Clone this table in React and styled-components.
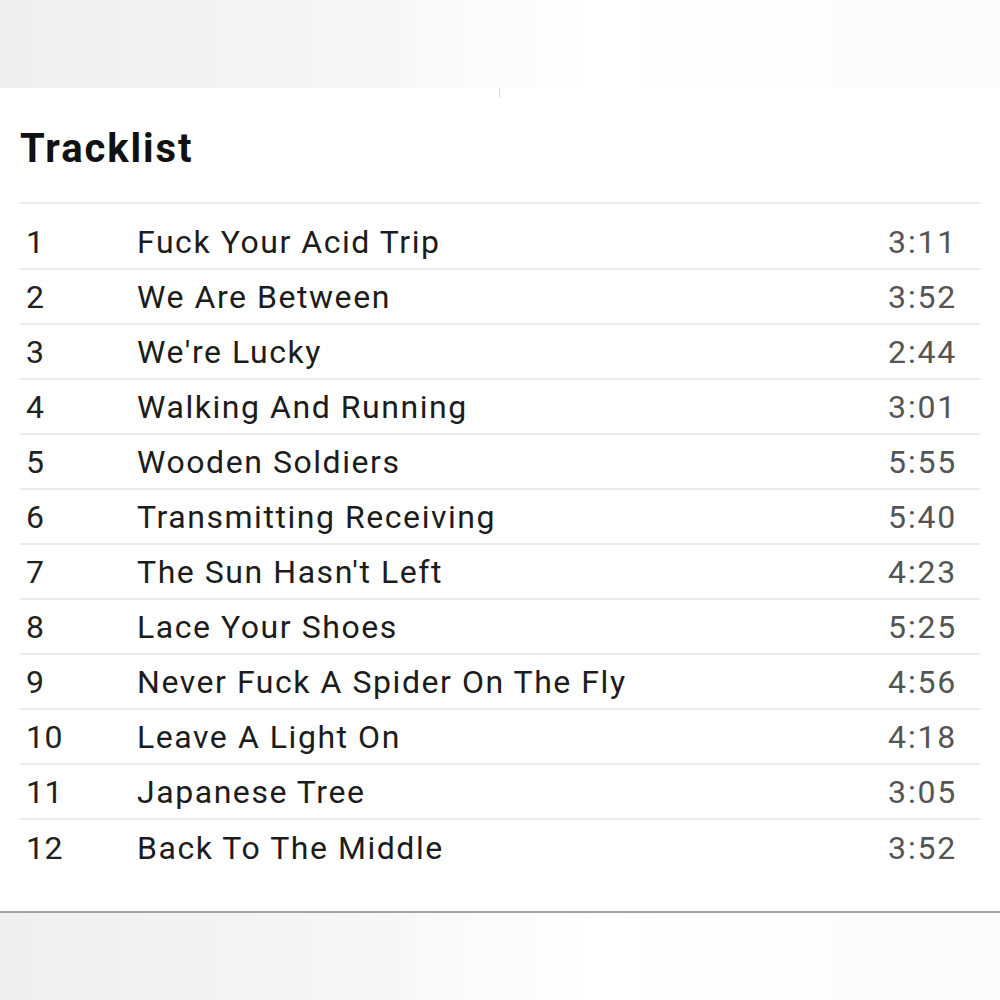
import React from "react";
import styled, { createGlobalStyle } from "styled-components";

const GlobalStyle = createGlobalStyle`
  html, body {
    margin: 0;
    padding: 0;
    background: #ffffff;
  }
  body {
    font-family: Roboto, "Liberation Sans", Arial, sans-serif;
  }
`;

const Page = styled.div`
  width: 1000px;
  height: 1000px;
  display: flex;
  flex-direction: column;
  background: linear-gradient(90deg, #efefef 0%, #f6f6f6 35%, #ffffff 60%, #fbfbfb 100%);
  overflow: hidden;
`;

const TopBand = styled.div`
  height: 88px;
  flex: none;
`;

const Panel = styled.section`
  position: relative;
  flex: none;
  background: #ffffff;
  padding: 0 20px 36px;
  border-bottom: 2px solid #a3a3a3;
`;

const Tick = styled.span`
  position: absolute;
  left: 499px;
  top: 0;
  width: 1px;
  height: 9px;
  background: #d6d6d6;
`;

const Header = styled.header`
  padding-top: 41px;
  padding-bottom: 33px;
  border-bottom: 2px solid #ebebeb;
`;

const Title = styled.h2`
  margin: 0;
  font-family: Roboto, "Liberation Sans", Arial, sans-serif;
  font-weight: 700;
  font-size: 40px;
  line-height: 40px;
  letter-spacing: 1.9px;
  color: #111111;
`;

const List = styled.ol`
  list-style: none;
  margin: 0;
  padding: 11px 0 0;
`;

const Row = styled.li`
  display: flex;
  align-items: center;
  height: 55px;
  box-sizing: border-box;
  border-bottom: ${(p) => (p.$last ? "none" : "2px solid #ebebeb")};
  font-size: 32px;
  color: #222222;
`;

const Num = styled.span`
  width: 117px;
  flex: none;
  padding-left: 6px;
  box-sizing: border-box;
  letter-spacing: 0.5px;
  color: #222222;
`;

const Name = styled.span`
  flex: 1;
  color: #1c1c1c;
  letter-spacing: 1.55px;
`;

const Duration = styled.span`
  flex: none;
  padding-right: 23px;
  color: #555555;
  letter-spacing: 1.8px;
`;

const tracks = [
  ["Fuck Your Acid Trip", "3:11"],
  ["We Are Between", "3:52"],
  ["We're Lucky", "2:44"],
  ["Walking And Running", "3:01"],
  ["Wooden Soldiers", "5:55"],
  ["Transmitting Receiving", "5:40"],
  ["The Sun Hasn't Left", "4:23"],
  ["Lace Your Shoes", "5:25"],
  ["Never Fuck A Spider On The Fly", "4:56"],
  ["Leave A Light On", "4:18"],
  ["Japanese Tree", "3:05"],
  ["Back To The Middle", "3:52"],
];

export default function App() {
  return (
    <>
      <GlobalStyle />
      <Page>
        <TopBand />
        <Panel>
          <Tick />
          <Header>
            <Title>Tracklist</Title>
          </Header>
          <List>
            {tracks.map(([name, dur], i) => (
              <Row key={i} $last={i === tracks.length - 1}>
                <Num>{i + 1}</Num>
                <Name>{name}</Name>
                <Duration>{dur}</Duration>
              </Row>
            ))}
          </List>
        </Panel>
      </Page>
    </>
  );
}
